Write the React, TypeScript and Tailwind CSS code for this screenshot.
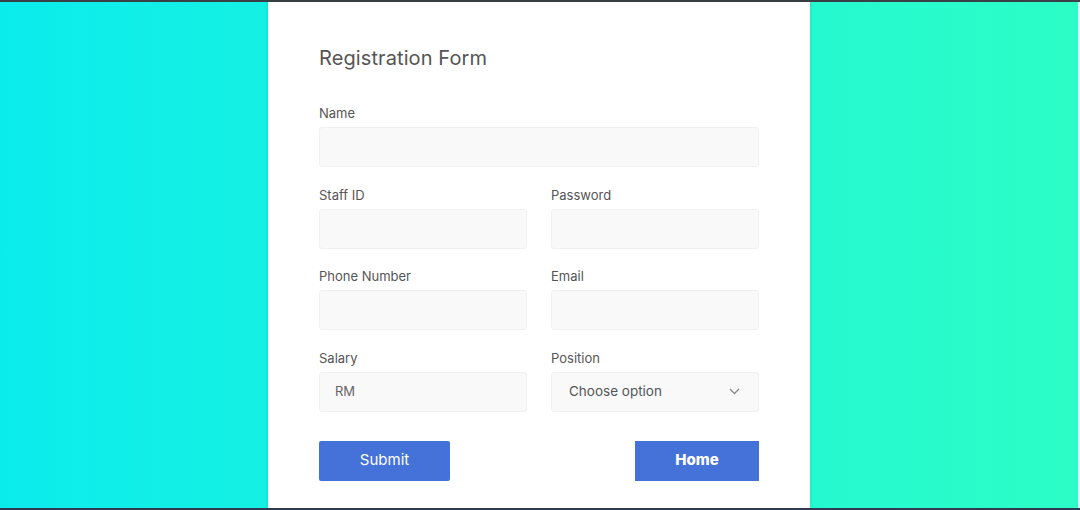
import React from "react";

const font = { fontFamily: "Inter, 'Noto Sans', sans-serif" };

function Field({ label, children }: { label: string; children?: React.ReactNode }) {
  return (
    <div className="flex flex-col">
      <label className="text-[13px] leading-[20px] text-[#555]">{label}</label>
      <div className="mt-[4px] h-[40px] rounded-[3px] border border-[#f1f1f1] bg-[#f9f9f9] flex items-center">
        {children}
      </div>
    </div>
  );
}

export default function App() {
  return (
    <div
      className="w-[1080px] h-[510px] flex flex-col overflow-hidden bg-[#3b4046]"
      style={font}
    >
      <div className="h-[2px] bg-[#3b4046]" />
      <div className="flex-1 flex">
        <div className="flex-1 flex justify-center bg-gradient-to-r from-[#0aecec] to-[#2cfdc6]">
          <div className="w-[542px] h-full bg-white px-[51px] pt-[42px] shadow-[0_0_4px_rgba(0,0,0,0.12)]">
            <h1 className="text-[20px] leading-[28px] text-[#555] tracking-[0.1px]">Registration Form</h1>
            <div className="mt-[31px] flex flex-col gap-[17.5px]">
              <Field label="Name" />
              <div className="grid grid-cols-2 gap-x-[24px] gap-y-[17.5px]">
                <Field label="Staff ID" />
                <Field label="Password" />
                <Field label="Phone Number" />
                <Field label="Email" />
                <Field label="Salary">
                  <span className="pl-[15px] text-[13px] text-[#666]">RM</span>
                </Field>
                <Field label="Position">
                  <div className="flex-1 flex items-center justify-between pl-[17px] pr-[18px]">
                    <span className="text-[13.5px] text-[#555]">Choose option</span>
                    <svg width="11" height="7" viewBox="0 0 11 7" fill="none">
                      <path d="M1 1l4.5 4.5L10 1" stroke="#888" strokeWidth="1.3" />
                    </svg>
                  </div>
                </Field>
              </div>
            </div>
            <div className="mt-[29px] flex justify-between">
              <button className="w-[131px] h-[40px] bg-[#4472d8] text-white text-[15px] font-normal rounded-[2px]">
                Submit
              </button>
              <button className="w-[124px] h-[40px] bg-[#4472d8] text-white text-[15px] font-extrabold">
                Home
              </button>
            </div>
          </div>
        </div>
        <div className="w-[2px] bg-[#e3f4f6]" />
      </div>
      <div className="h-[2px] bg-[#2f3a52]" />
    </div>
  );
}
